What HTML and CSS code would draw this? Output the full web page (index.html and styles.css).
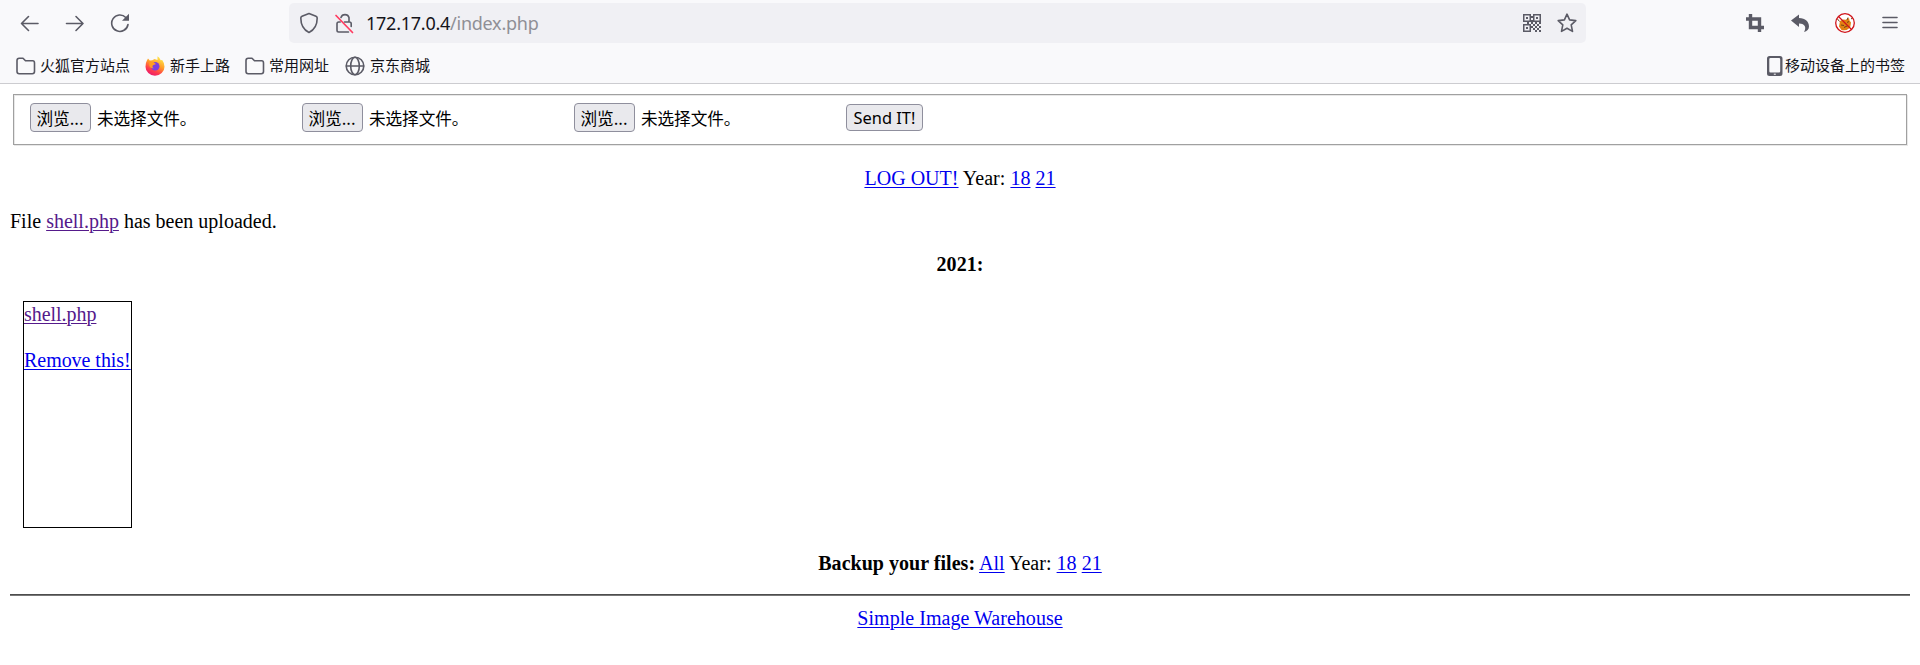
FILE: index.html
```
<!DOCTYPE html>
<html lang="zh-CN">
<head>
<meta charset="utf-8">
<title>Simple Image Warehouse</title>
<link rel="stylesheet" href="styles.css">
</head>
<body>
<header class="chrome">
  <div class="toolbar">
    <nav class="nav-buttons">
      <svg class="icon" width="20" height="20" viewBox="0 0 20 20"><path d="M18 10.500H1.500M8.500 3.500 1.500 10.500l7 7"/></svg>
      <svg class="icon" width="20" height="20" viewBox="0 0 20 20"><path d="M1.500 10.500H18M11 3.500l7 7-7 7"/></svg>
      <svg class="icon" width="20" height="20" viewBox="0 0 20 20"><path d="M15.800 4.500A8.200 8.200 0 1 0 18 11.500"/><path class="solid" d="M19 .8v7h-7z"/></svg>
    </nav>
    <div class="address">
      <svg class="icon shield" width="20" height="22" viewBox="0 0 20 22"><path d="M10 1.500 17 4.300Q18.200 4.800 18.200 6 18.200 16.500 10 20.500 1.800 16.500 1.800 6 1.800 4.800 3 4.300Z"/></svg>
      <svg class="icon lock" width="20" height="22" viewBox="0 0 20 22"><path d="M7 5.500a4.200 4.200 0 0 1 8 0V10M10.500 10h5q1.700 0 1.700 1.700v2.800M14.500 20H4.700Q3 20 3 18.300v-6.600Q3 10 4.700 10h1.500"/><path class="strike" d="M2 3.500 18.500 20.500"/></svg>
      <span class="url"><span class="host">172.17.0.4</span>/index.php</span>
      <svg class="qr" width="18" height="18" viewBox="0 0 18 18"><path fill-rule="evenodd" d="M0 0h8v8H0zM1.500 1.500v5h5v-5zM3 3h2v2H3zM10 0h8v8h-8zM11.500 1.500v5h5v-5zM13 3h2v2h-2zM0 10h8v8H0zM1.500 11.500v5h5v-5zM3 13h2v2H3zM8 2h2v2H8zM8 6h2v2H8zM8 8h2v2H8zM10 10h2v2h-2zM14 10h2v2h-2zM12 8h2v2h-2zM16 8h2v2h-2zM4 8h2v2H4zM12 12h2v2h-2zM16 12h2v2h-2zM10 14h2v2h-2zM14 14h2v2h-2zM12 16h2v2h-2zM16 16h2v2h-2zM8 12h2v2H8z"/></svg>
      <svg class="icon star" width="20" height="20" viewBox="0 0 20 20"><path d="m10 1.200 2.600 5.700 6.200.7-4.600 4.200 1.300 6.600-5.500-3.200-5.500 3.200 1.300-6.600L1.200 7.600l6.200-.7z"/></svg>
    </div>
    <div class="tools">
      <svg class="crop" width="18" height="18" viewBox="0 0 18 18"><path d="M0 5h13.500v9.500M4.500 0v13.500H18M13.500 13v5"/></svg>
      <svg class="undo" width="18" height="18" viewBox="0 0 18 18"><path d="M0 6.500 8 .5v3.500c6.500.2 10 3.800 10 8.500 0 3-2 4.500-5 5.500 2.500-4 1.500-8.500-5-8.500V13z"/></svg>
      <svg class="blocked" width="20" height="20" viewBox="0 0 20 20"><circle cx="10" cy="10" r="9" fill="#fff"/><path d="M4.500 11 5 8l3-1.500 3 .3L14 5l.5 2.500 1.500 2-.8 5Q12 18 6.500 17L4 13.500z" fill="#e28212"/><path d="m2.500 6 2 2.500M13 4.500l-1 2.500M6 12l3 .5M12 9.500l2-1M9 14.500l4-2M16 6l1.500-1" stroke="#70431b" fill="none"/><path d="M3.500 3.500 16.500 16.500" stroke="#d0141a" stroke-width="1.300"/><circle cx="10" cy="10" r="9.300" fill="none" stroke="#d0141a" stroke-width="1.300"/></svg>
      <svg class="icon menu" width="16" height="16" viewBox="0 0 16 16"><path d="M1 2.500h14M1 7.500h14M1 12.500h14"/></svg>
    </div>
  </div>
  <div class="bookmarks">
    <a class="bookmark"><svg class="icon folder" width="20" height="18" viewBox="0 0 20 18"><path d="M1 3.500Q1 1.200 3.200 1.200H7L9.500 3.800h7.200Q18.500 3.800 18.500 6v8.500q0 2.200-2.200 2.200H3.200Q1 16.700 1 14.500z"/></svg><span>火狐官方站点</span></a>
    <a class="bookmark fox"><svg width="20" height="20" viewBox="0 0 20 20"><defs><linearGradient id="flame" x1=".8" y1="0" x2=".3" y2="1"><stop offset="0" stop-color="#fff44f"/><stop offset=".45" stop-color="#ff9a28"/><stop offset=".75" stop-color="#ff3b4c"/><stop offset="1" stop-color="#e81870"/></linearGradient></defs><path d="M1.800 4.800 3 2.500l1.800 2 2.500-.3L9.500 3l3 1L12.500.3q2 .8 3.200 4l1.500-.3q2.300 3 2.300 6.700a9.500 9 0 0 1-19 0Q.5 7 1.800 4.800z" fill="url(#flame)"/><circle cx="10.200" cy="10.300" r="4.300" fill="#7a3fe0"/><path d="M4.500 6 8 5.800 11 8 8 9.200q-1.500 2 1 3-4 .5-4.800-3z" fill="#ff9d22"/></svg><span>新手上路</span></a>
    <a class="bookmark"><svg class="icon folder" width="20" height="18" viewBox="0 0 20 18"><path d="M1 3.500Q1 1.200 3.200 1.200H7L9.500 3.800h7.200Q18.500 3.800 18.500 6v8.500q0 2.200-2.200 2.200H3.200Q1 16.700 1 14.500z"/></svg><span>常用网址</span></a>
    <a class="bookmark"><svg class="icon globe" width="20" height="20" viewBox="0 0 20 20"><circle cx="10" cy="10" r="8.800"/><ellipse cx="10" cy="10" rx="4.300" ry="8.800"/><path d="M1.500 10h17"/></svg><span>京东商城</span></a>
    <a class="bookmark mobile"><svg width="16" height="20" viewBox="0 0 16 20"><path fill="#5b5b66" fill-rule="evenodd" d="M2.500 0h10.500q2.500 0 2.500 2.500v15q0 2.500-2.500 2.500H2.500Q0 20 0 17.500v-15Q0 0 2.500 0zM3.500 2q-1.200 0-1.200 1.200v12q0 1.200 1.200 1.200h8.500q1.200 0 1.200-1.200v-12q0-1.200-1.200-1.200z"/><path d="M6.800 18.200h2" stroke="#fff"/></svg><span>移动设备上的书签</span></a>
  </div>
</header>
<main class="page">
  <form class="upload">
    <div class="file"><button class="button browse" type="button">浏览...</button><span>未选择文件。</span></div>
    <div class="file"><button class="button browse" type="button">浏览...</button><span>未选择文件。</span></div>
    <div class="file"><button class="button browse" type="button">浏览...</button><span>未选择文件。</span></div>
    <button class="button send" type="button">Send IT!</button>
  </form>
  <p class="centered"><a class="link">LOG OUT!</a> Year: <a class="link">18</a> <a class="link">21</a></p>
  <p>File <a class="link visited">shell.php</a> has been uploaded.</p>
  <p class="centered"><b>2021:</b></p>
  <div class="card"><a class="link visited">shell.php</a><a class="link remove">Remove this!</a></div>
  <p class="centered backup"><b>Backup your files:</b> <a class="link">All</a> Year: <a class="link">18</a> <a class="link">21</a></p>
  <hr class="rule">
  <footer class="centered"><a class="link">Simple Image Warehouse</a></footer>
</main>
</body>
</html>
```
FILE: styles.css
```
* { box-sizing: border-box; }
body { margin: 0; background: #fff; color: #000; font: 20px/23px "Liberation Serif", "Times New Roman", serif; }
svg { display: block; flex: none; }
.chrome { height: 84px; background: #f9f9fb; border-bottom: 1px solid #ccccd0; color: #15141a; }
.toolbar { display: flex; height: 46px; padding-top: 3px; }
.icon { fill: none; stroke: #5b5b66; stroke-width: 1.6; stroke-linecap: round; stroke-linejoin: round; }
.icon .solid { fill: #5b5b66; stroke: none; }
.icon .strike { stroke: #ff3b60; stroke-width: 1.7; }
.nav-buttons { display: flex; gap: 25px; width: 289px; height: 40px; padding-left: 20px; align-items: center; }
.address { display: flex; align-items: center; width: 1297px; height: 40px; padding: 0 9px 0 10px; border-radius: 5px; background: #f0f0f4; }
.lock { margin-left: 15px; }
.url { margin-left: 12px; flex: 1; font: 18px/24px "Noto Sans", sans-serif; letter-spacing: -0.25px; color: #8f8f96; white-space: nowrap; }
.host { color: #15141a; }
.qr { fill: #5b5b66; }
.star { margin-left: 16px; }
.tools { display: flex; align-items: center; height: 40px; padding-left: 160px; }
.crop { fill: none; stroke: #5b5b66; stroke-width: 3.4; }
.undo { margin-left: 27px; fill: #5b5b66; }
.blocked { margin-left: 26px; }
.menu { margin-left: 27px; }
.bookmarks { display: flex; align-items: center; height: 37px; padding: 3px 15px 0 16px; gap: 15px; font: 15px/20px "Noto Sans CJK SC", sans-serif; }
.bookmark { display: flex; align-items: center; gap: 5px; white-space: nowrap; }
.bookmark span { padding-bottom: 2px; }
.bookmark.mobile { margin-left: auto; gap: 2px; }
.bookmark .folder { margin-right: -1px; }
.globe { margin-left: 1px; }
.page { padding: 10px 10px 0; }
.upload { display: flex; align-items: flex-start; height: 51px; margin: 0 3px; padding: 8px 16px 0; border: 1px solid #a0a0a0; box-shadow: inset 1px 1px #e8e8e8, 1px 1px #e8e8e8; font: 16.67px/29px "Noto Sans CJK SC", sans-serif; }
.file { display: flex; gap: 6px; width: 272px; white-space: nowrap; }
.file span { padding-top: 1px; letter-spacing: -0.1px; }
.button { margin: 0; padding: 0; border: 1px solid #8f8f9d; border-radius: 4px; background: #e9e9ed; color: #000; font: inherit; white-space: nowrap; }
.browse { width: 61px; height: 29px; padding: 1px 1px 0 0; line-height: 26px; }
.send { width: 77px; height: 27px; margin-top: 1px; padding-top: 1px; font: 16.4px/24px "Noto Sans", sans-serif; }
p { margin: 20px 0; }
.upload + p { margin-top: 22px; }
.centered { text-align: center; letter-spacing: 0.03px; }
.link { color: #0000ee; text-decoration: underline; text-decoration-thickness: 1px; text-underline-offset: 2px; }
.visited { color: #551a8b; }
.card { display: flex; flex-direction: column; align-items: flex-start; width: 109px; height: 227px; margin: 25px 0 24px 13px; padding-top: 1px; border: 1px solid #000; white-space: nowrap; letter-spacing: -0.04px; }
.remove { margin-top: 23px; }
.backup { margin-bottom: 19px; }
.rule { height: 2px; margin: 19px 0 11px; border: 0; border-top: 1px solid #4d4d4d; background: #777; }
```
